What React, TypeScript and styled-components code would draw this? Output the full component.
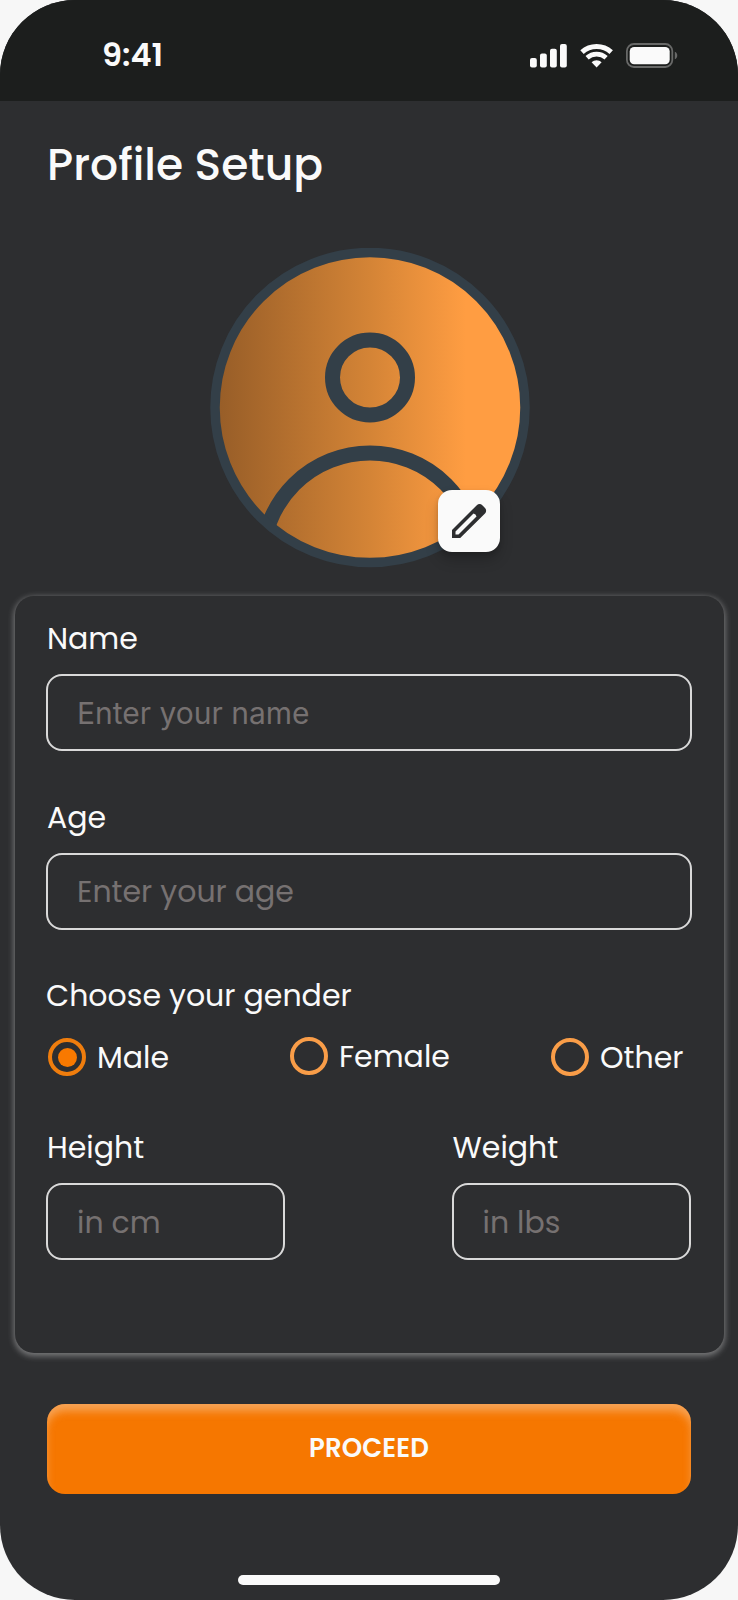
import React, { useState } from "react";
import styled, { createGlobalStyle } from "styled-components";

const GlobalStyle = createGlobalStyle`
  *, *::before, *::after { box-sizing: border-box; }
  body {
    margin: 0;
    background: #f7f7f7;
    font-family: Poppins, Inter, "Liberation Sans", sans-serif;
    -webkit-font-smoothing: antialiased;
  }
`;

const Screen = styled.div`
  display: flex;
  flex-direction: column;
  width: 738px;
  height: 1600px;
  overflow: hidden;
  border-radius: 75px;
  background: #2d2e30;
  color: #fafafa;
`;

const StatusBar = styled.header`
  display: flex;
  justify-content: space-between;
  align-items: center;
  flex: none;
  height: 101px;
  padding: 9px 59px 0 102px;
  background: #1c1e1d;
`;

const Time = styled.span`
  font-size: 32px;
  font-weight: 600;
  line-height: 40px;
`;

const StatusIcons = styled.svg`
  display: block;
  width: 150px;
  height: 26px;
`;

const Title = styled.h1`
  margin: 34px 0 0 47px;
  font-size: 44px;
  font-weight: 500;
  line-height: 60px;
`;

const AvatarWrap = styled.div`
  position: relative;
  flex: none;
  width: 320px;
  height: 320px;
  margin: 53px 0 0 210px;
`;

const AvatarArt = styled.svg`
  display: block;
  width: 320px;
  height: 320px;
`;

const EditButton = styled.button`
  position: absolute;
  left: 227.5px;
  top: 242px;
  display: flex;
  align-items: center;
  justify-content: center;
  width: 62px;
  height: 62px;
  padding: 0;
  border: 0;
  border-radius: 14px;
  background: #fafafa;
  box-shadow: 0 8px 14px rgba(0, 0, 0, 0.2), 0 2px 4px rgba(0, 0, 0, 0.15);
`;

const Card = styled.form`
  flex: none;
  width: 709px;
  height: 757px;
  margin: 28px 0 0 15px;
  padding: 23px 31px 0;
  border-radius: 19px;
  box-shadow: 0 2px 6px 1px rgba(250, 250, 250, 0.38);
  background: #2d2e30;
`;

const Field = styled.label<{ $width?: number }>`
  display: flex;
  flex-direction: column;
  gap: 15px;
  width: ${(p) => p.$width ?? 646}px;
  margin-bottom: 46.5px;
`;

const Label = styled.span<{ $indent?: number }>`
  font-size: 30px;
  font-weight: 400;
  line-height: 40px;
  white-space: nowrap;
  padding-left: ${(p) => p.$indent ?? 0}px;
`;

const Input = styled.input<{ $inter?: boolean }>`
  width: 100%;
  height: 77px;
  padding: ${(p) => (p.$inter ? 0 : 2)}px 29px 0;
  border: 2px solid #d9d9d9;
  border-radius: 16px;
  outline: 0;
  background: transparent;
  color: #fafafa;
  font-family: ${(p) => (p.$inter ? 'Inter, "Liberation Sans", sans-serif' : "inherit")};
  font-size: 30px;
  font-weight: 400;
  &::placeholder { color: #767171; opacity: 1; }
`;

const Options = styled.div`
  display: flex;
  margin: 22px 0 52px 2px;
`;

const Option = styled.label<{ $width: number; $lift?: number }>`
  display: flex;
  align-items: center;
  gap: 11px;
  width: ${(p) => p.$width}px;
  height: 38px;
  margin-top: ${(p) => -(p.$lift ?? 0)}px;
`;

const OptionText = styled(Label)`
  padding-top: 2px;
`;

const HiddenRadio = styled.input`
  appearance: none;
  position: absolute;
  margin: 0;
`;

const Ring = styled.span<{ $on: boolean }>`
  display: flex;
  align-items: center;
  justify-content: center;
  width: 38px;
  height: 38px;
  border: 4px solid ${(p) => (p.$on ? "#ef7d0d" : "#f99d48")};
  border-radius: 50%;
  &::after {
    content: "";
    width: 19px;
    height: 19px;
    border-radius: 50%;
    background: ${(p) => (p.$on ? "#f87900" : "transparent")};
  }
`;

const Measures = styled.div`
  display: flex;
  justify-content: space-between;
  padding-right: 2.5px;
`;

const Proceed = styled.button`
  flex: none;
  width: 644px;
  height: 90px;
  margin: 51px 0 0 47px;
  padding: 0 0 2px;
  border: 0;
  border-radius: 18px;
  background: #f67700;
  box-shadow: inset 0 8px 8px -1px rgba(250, 250, 250, 0.34);
  color: #fafafa;
  font-family: inherit;
  font-size: 26px;
  font-weight: 600;
  letter-spacing: 0.1px;
`;

const HomeBar = styled.div`
  flex: none;
  width: 262px;
  height: 10px;
  margin: 81px 0 0 238px;
  border-radius: 5px;
  background: #fafafa;
`;

const genders = [
  { name: "Male", width: 242, lift: 0 },
  { name: "Female", width: 261, lift: 1 },
  { name: "Other", width: 134, lift: 0 },
];

export default function App() {
  const [gender, setGender] = useState("Male");
  return (
    <>
      <GlobalStyle />
      <Screen>
        <StatusBar>
          <Time>9:41</Time>
          <StatusIcons viewBox="0 0 150 26">
            <g fill="#fafafa">
              <rect x="1" y="16" width="6.800" height="9.500" rx="2" />
              <rect x="11" y="11.500" width="6.800" height="14" rx="2" />
              <rect x="21" y="6.700" width="6.800" height="18.800" rx="2" />
              <rect x="31" y="2" width="6.800" height="23.500" rx="2" />
              <rect x="100.700" y="5" width="40" height="17.300" rx="4.500" />
            </g>
            <g fill="none" stroke="#fafafa">
              <path d="M53 10.200a21.500 21.500 0 0 1 29.200 0" strokeWidth="5" />
              <path d="M58.100 15.800a14 14 0 0 1 19 0" strokeWidth="4.600" />
            </g>
            <path d="M62.600 20.200c2.700-2.700 7.300-2.700 10 0l-5 5.400z" fill="#fafafa" />
            <rect x="97.900" y="2" width="45.400" height="23" rx="7" fill="none" stroke="#686968" strokeWidth="1.800" />
            <path d="M145.800 9.700c3.300 1.200 3.300 6.400 0 7.600z" fill="#686968" />
          </StatusIcons>
        </StatusBar>
        <Title>Profile Setup</Title>
        <AvatarWrap>
          <AvatarArt viewBox="0 0 320 320">
            <defs>
              <linearGradient id="skin" gradientUnits="userSpaceOnUse" x1="10" y1="0" x2="310" y2="0">
                <stop offset="0" stopColor="#985e28" />
                <stop offset="0.500" stopColor="#d48436" />
                <stop offset="0.820" stopColor="#ff9d42" />
              </linearGradient>
              <clipPath id="disc"><circle cx="160" cy="159.500" r="155" /></clipPath>
            </defs>
            <circle cx="160" cy="159.500" r="155" fill="url(#skin)" />
            <g fill="none" stroke="#333f48">
              <circle cx="160" cy="129.500" r="37.500" strokeWidth="15" />
              <circle cx="160" cy="312.500" r="107.500" strokeWidth="15" clipPath="url(#disc)" />
              <circle cx="160" cy="159.500" r="155" strokeWidth="9.500" />
            </g>
          </AvatarArt>
          <EditButton type="button" aria-label="Edit picture">
            <svg width="36" height="36" viewBox="0 0 36 36">
              <path
                d="M1 35V27L25.800 2.200c1.500-1.500 4-1.500 5.500 0l2.700 2.700c1.500 1.500 1.500 4 0 5.500L9.200 35zM4.500 31.500h3L25.500 13.500l-1-2-2-1L4.500 28.500z"
                fill="#2d2e30"
                fillRule="evenodd"
              />
            </svg>
          </EditButton>
        </AvatarWrap>
        <Card>
          <Field>
            <Label $indent={1}>Name</Label>
            <Input $inter placeholder="Enter your name" />
          </Field>
          <Field>
            <Label $indent={1}>Age</Label>
            <Input placeholder="Enter your age" />
          </Field>
          <Label>Choose your gender</Label>
          <Options>
            {genders.map((g) => (
              <Option key={g.name} $width={g.width} $lift={g.lift}>
                <HiddenRadio type="radio" name="gender" checked={gender === g.name} onChange={() => setGender(g.name)} />
                <Ring $on={gender === g.name} />
                <OptionText>{g.name}</OptionText>
              </Option>
            ))}
          </Options>
          <Measures>
            <Field $width={239}>
              <Label $indent={1}>Height</Label>
              <Input placeholder="in cm" />
            </Field>
            <Field $width={239}>
              <Label $indent={1}>Weight</Label>
              <Input placeholder="in lbs" />
            </Field>
          </Measures>
        </Card>
        <Proceed type="button">PROCEED</Proceed>
        <HomeBar />
      </Screen>
    </>
  );
}
